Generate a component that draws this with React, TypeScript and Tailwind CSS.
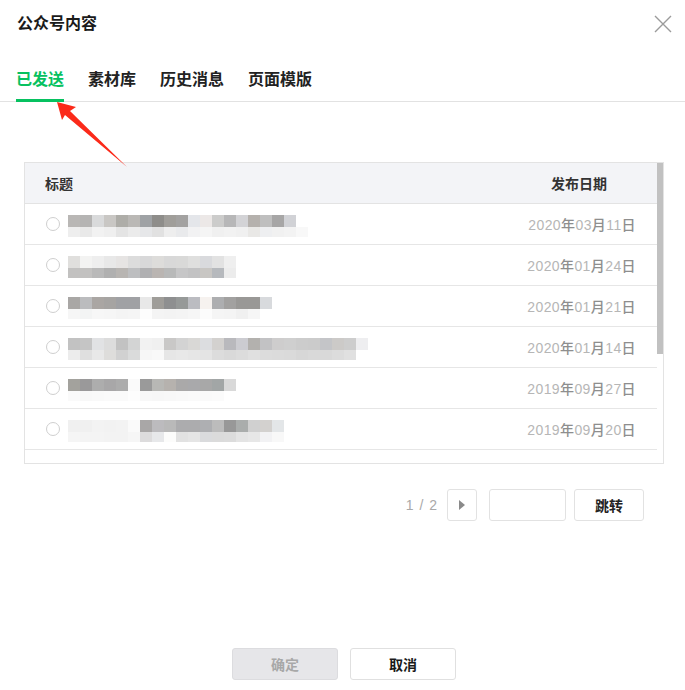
import React from "react";

const rows: { top: string[]; bottom: string[]; date: [string, string, string] }[] = [
  {
    top: "b9b7b5 b5b4b3 d9dadb c9c7c4 aeada8 bab8b5 9fa2a5 8e8d8a a09e9a a3a2a1 e4e6ea ece8e7 cccccb b7b7b8 d3d3d6 b5b1ad bfbfbf a7a6a6 d1d2d6".split(" "),
    bottom: "eeeeee e9e9e9 f2f2f2 efefef e4e4e4 ebebeb e6e7e9 e1e1e1 eeeeee e9eaec f2f2f3 f5f5f5 f0f0f0 f2f2f2 f0f0f0 e9e8e6 eeeff1 f1f1f1 f3f3f3 f8f8f8".split(" "),
    date: ["2020", "03", "11"],
  },
  {
    top: "e0dfdd f3f3f2 eeeeee e8e8e8 e6e4e3 dcdcdc d8d8d9 dddcda d8d8d8 d9d9d8 dfdfde d9dadd e2e2e2 efefef".split(" "),
    bottom: "c2c1c0 c2c1c0 b9b9b9 b0b0b0 b8b5b2 bdbec0 b0b0b2 bab5b2 b8b9b9 c6c6c7 c2c2c3 c8c6c3 b6b9bd ececec".split(" "),
    date: ["2020", "01", "24"],
  },
  {
    top: "a9a7a5 bbbcbe aaa6a3 a6a4a2 a0a1a4 a0a1a4 e8e8e8 9f9d99 8e8f90 969998 bbbcc1 f6f2ef adaeb0 a2a1a0 999896 999896 d8dadd".split(" "),
    bottom: "f6f6f6 f3f4f4 f7f7f7 f6f6f6 f4f4f4 f5f5f5 fdfdfd f4f4f4 f3f3f3 f4f4f4 f6f6f6 fcfcfc f5f5f5 f4f4f4 f0f0f0 f6f6f6".split(" "),
    date: ["2020", "01", "21"],
  },
  {
    top: "c2c2c2 c5c5c5 e1e2e4 dcdcdc c2c2c2 d3d4d4 f2f2f2 f0f0f0 c9c8c7 d3d3d3 d9d8d6 dcdde0 d3d1cf b9b9bd ccccd1 b3b1ae c2c2c4 cecdcd cfcfcf cccccc cbcbcb c4c5c8 cccac8 cdcdcd eeeef0".split(" "),
    bottom: "ececec dfdfdf e8e8e8 dedddb d1d1d1 dadbdb f7f7f7 f9f9f9 e6e6e6 e8e8e8 e6e6e6 e4e4e4 dcdcdc d9d9d9 dcdcdc e0e0e0 dcdcdc dbdbdb dadada d7d7d7 d9d9d9 d9d9d9 dcdcdc e0e0e0".split(" "),
    date: ["2020", "01", "14"],
  },
  {
    top: "a3a29d 9a999a adadad a8a7a8 acacac fafafa 9a9a9a b8b8b5 b6b2ae aaa9a9 a9a9ab a8a8a8 a2a6a6 d9d9d9".split(" "),
    bottom: "fafafa f8f8f8 f9f9f9 fafafa fafafa fdfdfd f8f8f8 f7f7f7 f8f8f8 f9f9f9 fafafa fafafa fbfbfb".split(" "),
    date: ["2019", "09", "27"],
  },
  {
    top: "f0f0f0 f0f0f0 f3f3f3 f2f2f2 f3f3f3 fafafa a9a7a7 bcbbbe b9b9b9 acacae acacae aeafb2 bcbcbc 989898 aaadac d0d0d0 d3d1cf e3e6e8".split(" "),
    bottom: "f5f5f5 f4f4f4 f4f4f4 f3f3f3 f3f3f3 f6f6f6 dddcdd e7e8ea fcfcfb e2e2e2 e5e5e5 dadbdd dbdbdb dcdcdc e4e4e4 e7e7e7 f2f2f4 f8f8f8".split(" "),
    date: ["2019", "09", "20"],
  },
];

function Mosaic({ top, bottom }: { top: string[]; bottom: string[] }) {
  const n = Math.max(top.length, bottom.length);
  return (
    <svg width={n * 12} height={22} className="block">
      {top.map((c, i) => (
        <rect key={"t" + i} x={i * 12} y={0} width={12} height={12} fill={"#" + c} />
      ))}
      {bottom.map((c, i) => (
        <rect key={"b" + i} x={i * 12} y={12} width={12} height={10} fill={"#" + c} />
      ))}
    </svg>
  );
}

function DateText({ d }: { d: [string, string, string] }) {
  return (
    <span className="text-[14px] tracking-[0.4px] leading-none whitespace-nowrap">
      <span className="text-[#b6b6b6] font-['Liberation_Sans',sans-serif] font-light">{d[0]}</span>
      <span className="text-[#8e8e8e] font-medium">年</span>
      <span className="text-[#b6b6b6] font-['Liberation_Sans',sans-serif] font-light">{d[1]}</span>
      <span className="text-[#8e8e8e] font-medium">月</span>
      <span className="text-[#b6b6b6] font-['Liberation_Sans',sans-serif] font-light">{d[2]}</span>
      <span className="text-[#8e8e8e] font-medium">日</span>
    </span>
  );
}

export default function App() {
  const tabs = ["已发送", "素材库", "历史消息", "页面模版"];
  return (
    <div className="relative w-[685px] h-[690px] bg-white font-['Noto_Sans_CJK_SC','Noto_Sans',sans-serif] text-[#222] overflow-hidden">
      {/* Header */}
      <div className="flex justify-between items-start h-[58px] pl-[17px] pr-[13px] pt-[11px]">
        <div className="text-[16px] font-bold leading-[22px] text-[#1a1a1a]">公众号内容</div>
        <svg width="18" height="18" viewBox="0 0 18 18" className="mt-[4px]">
          <path d="M1 1 L17 17 M17 1 L1 17" stroke="#9b9b9b" strokeWidth="1.4" fill="none" />
        </svg>
      </div>

      {/* Tabs */}
      <div className="flex h-[44px] border-b border-[#e2e2e2] pl-[16px] gap-[24px]">
        {tabs.map((t, i) => (
          <div
            key={t}
            className={
              "relative flex items-center pb-[3px] text-[16px] font-bold leading-none " +
              (i === 0 ? "text-[#07c160]" : "text-[#222]")
            }
          >
            {t}
            {i === 0 && <div className="absolute left-0 right-0 bottom-[-1px] h-[3px] bg-[#07c160]" />}
          </div>
        ))}
      </div>

      {/* Table */}
      <div className="mt-[60px] ml-[24px] w-[640px] h-[302px] border border-[#e3e3e3] flex overflow-hidden">
        <div className="flex-1 flex flex-col">
          <div className="h-[41px] shrink-0 bg-[#f3f4f7] border-b border-[#e3e3e3] flex items-center justify-between pl-[20px] pr-[50px] text-[14px] font-bold text-[#333]">
            <span>标题</span>
            <span>发布日期</span>
          </div>
          {rows.map((r, i) => (
            <div key={i} className="h-[41px] shrink-0 border-b border-[#e6e6e6] flex items-center justify-between pl-[21px] pr-[21px]">
              <div className="flex items-center gap-[8px]">
                <div className="w-[14px] h-[14px] rounded-full border border-[#cfcfcf] bg-white" />
                <div className="mt-[3px]">
                  <Mosaic top={r.top} bottom={r.bottom} />
                </div>
              </div>
              <DateText d={r.date} />
            </div>
          ))}
        </div>
        <div className="w-[6px] shrink-0 flex flex-col">
          <div className="h-[191px] bg-[#c1c1c1]" />
        </div>
      </div>

      {/* Pagination */}
      <div className="flex justify-end items-center mt-[25px] pr-[41px] h-[32px]">
        <span className="text-[14px] text-[#a9a9a9] font-['Liberation_Sans',sans-serif] tracking-[1px] mr-[9px]">1 / 2</span>
        <div className="w-[30px] h-[32px] border border-[#e2e2e2] rounded-[3px] flex items-center justify-center mr-[12px]">
          <svg width="8" height="12" viewBox="0 0 8 12">
            <path d="M1 1 L7 6 L1 11 Z" fill="#8a8a8a" />
          </svg>
        </div>
        <div className="w-[77px] h-[32px] border border-[#e2e2e2] rounded-[3px] mr-[8px]" />
        <div className="w-[70px] h-[32px] border border-[#e2e2e2] rounded-[3px] flex items-center justify-center text-[14px] font-bold text-[#222]">
          跳转
        </div>
      </div>

      {/* Footer buttons */}
      <div className="flex justify-center gap-[12px] mt-[127px] pl-[3px]">
        <div className="w-[106px] h-[32px] rounded-[3px] bg-[#e6e6e9] border border-[#dcdcdf] flex items-center justify-center text-[14px] font-bold text-[#a8a8a8]">
          确定
        </div>
        <div className="w-[106px] h-[32px] rounded-[3px] bg-white border border-[#e0e0e0] flex items-center justify-center text-[14px] font-bold text-[#1a1a1a]">
          取消
        </div>
      </div>

      {/* Red arrow annotation */}
      <svg className="absolute left-0 top-0 pointer-events-none" width="685" height="690">
        <polygon
          points="57,102 76,107 70,111 127,167 65,115 62,120"
          fill="#fb2a1a"
        />
      </svg>
    </div>
  );
}
